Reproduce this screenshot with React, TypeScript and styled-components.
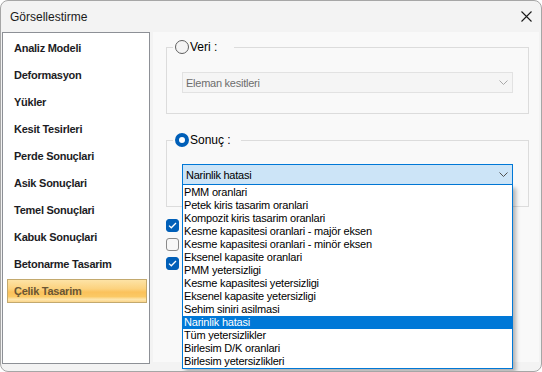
import React from "react";
import styled, { createGlobalStyle } from "styled-components";

const Global = createGlobalStyle`
  html, body { margin: 0; padding: 0; background: #ffffff; }
  body { font-family: "Liberation Sans", Arial, sans-serif; }
  * { box-sizing: border-box; }
`;

const Window = styled.div`
  width: 542px;
  height: 372px;
  border: 1px solid #a6a6a6;
  border-radius: 8px;
  background: #f3f3f3;
  display: flex;
  flex-direction: column;
  overflow: hidden;
`;

const TitleBar = styled.div`
  height: 31px;
  flex: none;
  display: flex;
  align-items: center;
  justify-content: space-between;
  padding: 0 9px;
`;

const Title = styled.span`
  font-size: 12px;
  color: #1a1a1a;
`;

const Body = styled.div`
  flex: 1;
  display: flex;
  gap: 3px;
  padding: 0 2px 7px 1px;
`;

const NavPanel = styled.div`
  width: 148px;
  flex: none;
  background: #ffffff;
  border: 1px solid #8d9096;
  padding: 3px 2px 0 4px;
  display: flex;
  flex-direction: column;
  gap: 3px;
`;

const NavItem = styled.div<{ $active?: boolean }>`
  height: 24px;
  display: flex;
  align-items: center;
  padding-left: 6px;
  font-size: 11px;
  font-weight: bold;
  letter-spacing: -0.25px;
  border: 1px solid ${(p) => (p.$active ? "#c3a96e" : "transparent")};
  color: ${(p) => (p.$active ? "#6a5634" : "#1c1c24")};
  background: ${(p) =>
    p.$active
      ? "linear-gradient(to bottom, #fde3a6 0%, #fcd27e 40%, #fbc25c 55%, #fbc965 75%, #fde6ae 88%, #fbd58a 100%)"
      : "transparent"};
`;

const Content = styled.div`
  flex: 1;
  height: 330px;
  align-self: flex-start;
  background: #f9f9f9;
  padding: 8px 10px 0 13px;
  display: flex;
  flex-direction: column;
`;

const Group = styled.fieldset<{ $gapTop?: number; $padTop: number; $padBottom: number }>`
  margin: ${(p) => p.$gapTop ?? 0}px 0 0 0;
  border: 1px solid #dcdcdc;
  padding: ${(p) => p.$padTop}px 15px ${(p) => p.$padBottom}px 15px;
  min-width: 0;
`;

const Legend = styled.legend<{ $padRight: number }>`
  margin-left: -9px;
  padding: 0 ${(p) => p.$padRight}px 0 2px;
  height: 14px;
  display: flex;
  align-items: center;
  gap: 1px;
  font-size: 12px;
  color: #000;
`;

const Radio = styled.span<{ $checked?: boolean }>`
  width: 14px;
  height: 14px;
  border-radius: 50%;
  flex: none;
  box-sizing: border-box;
  border: ${(p) => (p.$checked ? "4px solid #005fb8" : "1px solid #5f5f5f")};
  background: ${(p) => (p.$checked ? "#ffffff" : "#f4f4f4")};
`;

const ComboWrap = styled.div`
  position: relative;
`;

const Combo = styled.div<{ $open?: boolean }>`
  height: 21px;
  display: flex;
  align-items: center;
  justify-content: space-between;
  padding: 0 4px 0 3px;
  font-size: 11px;
  letter-spacing: -0.25px;
  border: 1px solid ${(p) => (p.$open ? "#0078d7" : "#e2e2e2")};
  background: ${(p) => (p.$open ? "#cce4f7" : "#f5f5f5")};
  color: ${(p) => (p.$open ? "#000000" : "#6d6d6d")};
`;

const DropList = styled.div`
  position: absolute;
  top: 100%;
  left: 0;
  right: 0;
  z-index: 10;
  padding-top: 1px;
  background: #ffffff;
  border: 1px solid #0078d7;
  border-top: none;
  box-shadow: 3px 3px 4px rgba(0, 0, 0, 0.28);
`;

const ListItem = styled.div<{ $selected?: boolean }>`
  height: 13px;
  line-height: 13px;
  padding-left: 1px;
  font-size: 11px;
  letter-spacing: -0.2px;
  white-space: nowrap;
  background: ${(p) => (p.$selected ? "#0078d7" : "transparent")};
  color: ${(p) => (p.$selected ? "#ffffff" : "#000000")};
`;

const Checks = styled.div`
  margin-top: 12px;
  display: flex;
  flex-direction: column;
  gap: 6px;
`;

const CheckBox = styled.span<{ $checked?: boolean }>`
  width: 13px;
  height: 13px;
  border-radius: 3px;
  display: flex;
  align-items: center;
  justify-content: center;
  border: 1px solid ${(p) => (p.$checked ? "#005fb8" : "#8a8a8a")};
  background: ${(p) => (p.$checked ? "#005fb8" : "#f7f7f7")};
`;

const Chevron = ({ color }: { color: string }) => (
  <svg width="9" height="5" viewBox="0 0 9 5">
    <path d="M0.5 0.5 L4.5 4.5 L8.5 0.5" fill="none" stroke={color} strokeWidth="1" />
  </svg>
);

const CloseIcon = () => (
  <svg width="11" height="11" viewBox="0 0 11 11">
    <path d="M0.5 0.5 L10.5 10.5 M10.5 0.5 L0.5 10.5" stroke="#1a1a1a" strokeWidth="1.1" />
  </svg>
);

const Tick = () => (
  <svg width="9" height="7" viewBox="0 0 9 7">
    <path d="M1 3.6 L3.3 5.8 L8 1" fill="none" stroke="#ffffff" strokeWidth="1.3" />
  </svg>
);

const navItems = [
  "Analiz Modeli",
  "Deformasyon",
  "Yükler",
  "Kesit Tesirleri",
  "Perde Sonuçlari",
  "Asik Sonuçlari",
  "Temel Sonuçlari",
  "Kabuk Sonuçlari",
  "Betonarme Tasarim",
  "Çelik Tasarim",
];

const options = [
  "PMM oranlari",
  "Petek kiris tasarim oranlari",
  "Kompozit kiris tasarim oranlari",
  "Kesme kapasitesi oranlari - majör eksen",
  "Kesme kapasitesi oranlari - minör eksen",
  "Eksenel kapasite oranlari",
  "PMM yetersizligi",
  "Kesme kapasitesi yetersizligi",
  "Eksenel kapasite yetersizligi",
  "Sehim siniri asilmasi",
  "Narinlik hatasi",
  "Tüm yetersizlikler",
  "Birlesim D/K oranlari",
  "Birlesim yetersizlikleri",
];

export default function App() {
  const selected = "Narinlik hatasi";
  return (
    <>
      <Global />
      <Window>
        <TitleBar>
          <Title>Görsellestirme</Title>
          <CloseIcon />
        </TitleBar>
        <Body>
          <NavPanel>
            {navItems.map((n) => (
              <NavItem key={n} $active={n === "Çelik Tasarim"}>
                {n}
              </NavItem>
            ))}
          </NavPanel>
          <Content>
            <Group $padTop={18} $padBottom={20}>
              <Legend $padRight={17}>
                <Radio />
                Veri :
              </Legend>
              <Combo>
                Eleman kesitleri
                <Chevron color="#a8a8a8" />
              </Combo>
            </Group>
            <Group $gapTop={19} $padTop={17} $padBottom={21}>
              <Legend $padRight={10}>
                <Radio $checked />
                Sonuç :
              </Legend>
              <ComboWrap>
                <Combo $open>
                  {selected}
                  <Chevron color="#505050" />
                </Combo>
                <DropList>
                  {options.map((o) => (
                    <ListItem key={o} $selected={o === selected}>
                      {o}
                    </ListItem>
                  ))}
                </DropList>
              </ComboWrap>
            </Group>
            <Checks>
              <CheckBox $checked>
                <Tick />
              </CheckBox>
              <CheckBox />
              <CheckBox $checked>
                <Tick />
              </CheckBox>
            </Checks>
          </Content>
        </Body>
      </Window>
    </>
  );
}
